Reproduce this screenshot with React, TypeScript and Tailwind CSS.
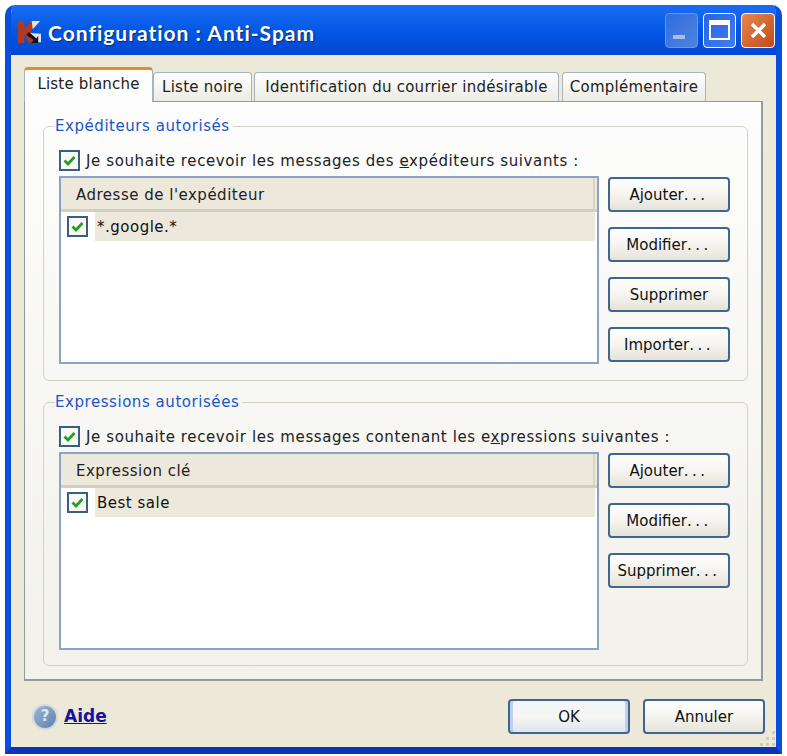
import type { ReactNode } from 'react';

const FONT = 'font-["DejaVu_Sans","Noto_Sans",sans-serif]';

function Check({ className = '' }: { className?: string }) {
  return (
    <span
      className={`flex h-[21px] w-[21px] shrink-0 items-center justify-center border-2 border-[#3b5d84] bg-[#f8f8f4] ${className}`}
    >
      <svg width="15" height="15" viewBox="0 0 15 15">
        <path d="M2.5 7.5 L6 11 L12.5 4" fill="none" stroke="#21a121" strokeWidth="2.8" />
      </svg>
    </span>
  );
}

function XpButton({ children, selected = false }: { children: ReactNode; selected?: boolean }) {
  return (
    <button
      type="button"
      className={`flex h-[35px] w-[122px] items-center justify-center rounded-[4px] border-2 border-[#3f6690] pt-[2px] text-[15px] text-[#111] ${
        selected
          ? 'bg-gradient-to-b from-[#f2f6fb] via-[#f6f6f2] to-[#dfe6ef] shadow-[inset_3px_0_0_#bcd0ea,inset_-3px_0_0_#bcd0ea]'
          : 'bg-gradient-to-b from-white via-[#f5f4ef] to-[#e6e3d8]'
      }`}
    >
      {children}
    </button>
  );
}

function Dots() {
  return <span className="tracking-[3.5px]">...</span>;
}

function Tab({ label, width }: { label: string; width: string }) {
  return (
    <div
      className={`flex h-[29px] items-center justify-center rounded-t-[4px] border border-b-0 border-[#a6b4c0] bg-gradient-to-b from-white to-[#ecebe4] pt-[1px] text-[15px] tracking-[0.25px] text-[#222] ${width}`}
    >
      {label}
    </div>
  );
}

function ListBox({ header, row, height }: { header: string; row: string; height: string }) {
  return (
    <div className={`w-[540px] border-2 border-[#8ba4c3] bg-white ${height}`}>
      <div className="flex h-[34px] border-b-[3px] border-[#d2cfbe] bg-[#ece9dc]">
        <div className="flex flex-1 items-center border-r-2 border-[#d8d5c6] pl-[15px] pt-[4px] text-[15px] tracking-[0.5px] text-[#222]">
          {header}
        </div>
        <div className="w-[2px]" />
      </div>
      <div className="flex h-[29px] items-center pl-[6px]">
        <Check />
        <div className="ml-[7px] mr-[2px] flex h-full flex-1 items-center bg-[#ece9dc] pl-[2px] pt-[2px] text-[15px] tracking-[0.5px] text-[#111]">
          {row}
        </div>
      </div>
    </div>
  );
}

function Group({
  legend,
  label,
  children,
  buttons,
  className,
}: {
  legend: string;
  label: ReactNode;
  children: ReactNode;
  buttons: ReactNode;
  className: string;
}) {
  return (
    <fieldset className={`rounded-[6px] border border-[#d2d1c4] pl-[15px] ${className}`}>
      <legend className="-ml-[4px] pr-[3px] text-[15px] leading-[22px] tracking-[0.55px] text-[#1a55c8]">
        {legend}
      </legend>
      <div className="mt-[10px] flex h-[26px] items-center gap-[6px]">
        <Check />
        <span className="pt-[2px] text-[15px] tracking-[0.6px] text-[#222]">{label}</span>
      </div>
      <div className="mt-[3px] flex items-start gap-[9px]">
        {children}
        <div className="flex flex-col gap-[15px] pt-[1px]">{buttons}</div>
      </div>
    </fieldset>
  );
}

export default function App() {
  return (
    <div className={`h-[756px] w-[787px] bg-white pl-[5px] pt-[5px] ${FONT}`}>
      <div className="relative flex h-[749px] w-[777px] flex-col overflow-hidden rounded-t-[10px] border-x-[6px] border-b-[7px] border-[#0a4fdc] border-b-[#0a35b8] bg-[#ece9d8]">
        {/* Title bar */}
        <div className="-mx-[6px] flex h-[50px] shrink-0 items-center bg-gradient-to-b from-[#1a6cf2] via-[#0358e6] to-[#0246d2] pl-[12px] pr-[5px]">
          <svg width="24" height="24" viewBox="0 0 26 26" className="mt-[3px] shrink-0">
            <path d="M1 1 H8 V10 L15 1 H24 L15 11 L21 25 H13 L8 15 V25 H1 Z" fill="#b5391f" />
            <path d="M16 1 H25 L17 10 Z" fill="#e9e4d8" />
            <path d="M13 14 L22 24 H26 V15 Z" fill="#dfe5ea" />
            <path d="M13 13 L21 20 L23 17 V25 H15 L18 22 L10 16 Z" fill="#111" />
          </svg>
          <span className='ml-[7px] mt-[5px] font-["Lato",sans-serif] text-[21px] font-bold tracking-[1px] text-white [text-shadow:1px_1px_1px_#0a2a80]'>
            Configuration : Anti-Spam
          </span>
          <div className="ml-auto flex items-center gap-[5px] pr-[2px]">
            <div className="flex h-[35px] w-[33px] items-end rounded-[4px] border border-[#6f96dc] bg-gradient-to-br from-[#2f6de0] to-[#4f82dc] pb-[8px] pl-[7px]">
              <div className="h-[4px] w-[12px] bg-[#a8bde2]" />
            </div>
            <div className="flex h-[35px] w-[33px] items-center justify-center rounded-[4px] border border-white bg-gradient-to-br from-[#2a63e8] to-[#3f7df0]">
              <div className="h-[20px] w-[21px] border-2 border-t-[5px] border-white" />
            </div>
            <div className="flex h-[35px] w-[34px] items-center justify-center rounded-[4px] border border-white bg-gradient-to-br from-[#e8884f] to-[#c04a18]">
              <svg width="19" height="19" viewBox="0 0 19 19">
                <path d="M3 3 L16 16 M16 3 L3 16" stroke="#fff" strokeWidth="3.4" />
              </svg>
            </div>
          </div>
        </div>

        {/* Tabs */}
        <div className="flex-1 pl-[13px] pt-[12px]">
          <div className="flex items-end">
            <div className="relative z-10 -mb-[1px] flex h-[35px] w-[129px] items-center justify-center rounded-t-[4px] border-x border-[#a6b4c0] border-t-[3px] border-t-[#e68b2c] bg-[#fdfdfc] pb-[3px] text-[15px] tracking-[0.2px] text-[#222]">
              Liste blanche
            </div>
            <div className="flex items-end gap-[2px]">
              <Tab label="Liste noire" width="w-[99px]" />
              <Tab label="Identification du courrier indésirable" width="w-[305px]" />
              <Tab label="Complémentaire" width="ml-[1px] w-[144px]" />
            </div>
          </div>
          <div className="h-[580px] w-[739px] border border-[#919b9c] border-b-2 border-r-2 bg-gradient-to-b from-[#fdfdfd] to-[#f2f1ea] pl-[18px] pt-[13px]">
            <Group
              legend="Expéditeurs autorisés"
              className="h-[266px] w-[705px]"
              label={
                <>
                  Je souhaite recevoir les messages des <u>e</u>xpéditeurs suivants :
                </>
              }
              buttons={
                <>
                  <XpButton>Ajouter<Dots /></XpButton>
                  <XpButton>Modifier<Dots /></XpButton>
                  <XpButton>Supprimer</XpButton>
                  <XpButton>Importer<Dots /></XpButton>
                </>
              }
            >
              <ListBox header="Adresse de l'expéditeur" row="*.google.*" height="h-[188px]" />
            </Group>
            <Group
              legend="Expressions autorisées"
              className="mt-[10px] h-[275px] w-[705px]"
              label={
                <>
                  Je souhaite recevoir les messages contenant les e<u>x</u>pressions suivantes :
                </>
              }
              buttons={
                <>
                  <XpButton>Ajouter<Dots /></XpButton>
                  <XpButton>Modifier<Dots /></XpButton>
                  <XpButton>Supprimer<Dots /></XpButton>
                </>
              }
            >
              <ListBox header="Expression clé" row="Best sale" height="h-[198px]" />
            </Group>
          </div>

          {/* Footer */}
          <div className="flex items-center pl-[8px] pr-[11px] pt-[18px]">
            <div className="flex h-[26px] w-[26px] items-center justify-center rounded-full border-2 border-[#d4d8dc] bg-gradient-to-br from-[#9db5d4] to-[#5f82ad] text-[15px] font-bold text-[#dfe8f2]">
              ?
            </div>
            <a className="ml-[6px] text-[17px] font-bold text-[#14149c] underline">Aide</a>
            <div className="ml-auto flex gap-[13px]">
              <XpButton selected>OK</XpButton>
              <XpButton>Annuler</XpButton>
            </div>
          </div>
        </div>

        {/* Size grip */}
        <svg width="18" height="18" viewBox="0 0 18 18" className="absolute bottom-0 right-0">
          <path d="M14 2h3v3h-3z M8 8h3v3H8z M14 8h3v3h-3z M2 14h3v3H2z M8 14h3v3H8z M14 14h3v3h-3z" fill="#cfccba" />
        </svg>
      </div>
    </div>
  );
}
